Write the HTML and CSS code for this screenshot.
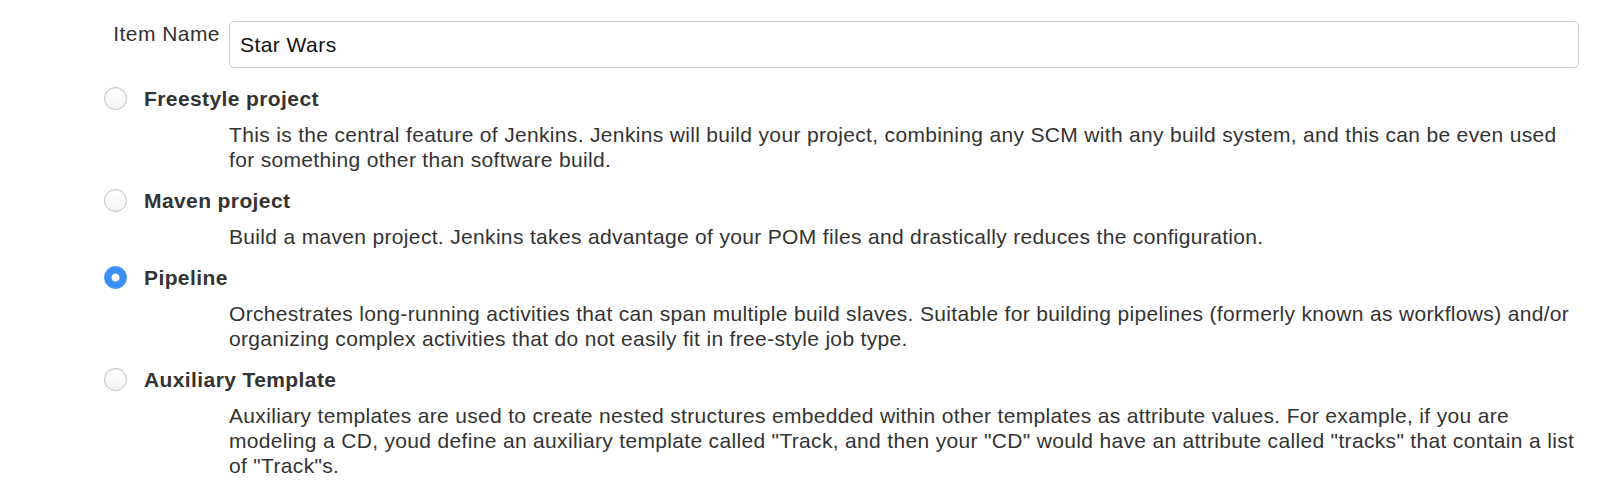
FILE: index.html
```html
<!DOCTYPE html>
<html lang="en">
<head>
    <meta charset="UTF-8">
    <title>New Item</title>
    <link rel="stylesheet" href="styles.css">
</head>
<body>
    <form class="new-item">
        <div class="name-row">
            <label for="name" class="name-label">Item Name</label>
            <input type="text" id="name" name="name" class="name-input" value="Star Wars">
        </div>

        <div class="option">
            <label class="option-title">
                <input type="radio" name="mode" value="freestyle">
                <span>Freestyle project</span>
            </label>
            <div class="option-desc">This is the central feature of Jenkins. Jenkins will build your project, combining any SCM with any build system, and this can be even used for something other than software build.</div>
        </div>

        <div class="option">
            <label class="option-title">
                <input type="radio" name="mode" value="maven">
                <span>Maven project</span>
            </label>
            <div class="option-desc">Build a maven project. Jenkins takes advantage of your POM files and drastically reduces the configuration.</div>
        </div>

        <div class="option">
            <label class="option-title">
                <input type="radio" name="mode" value="pipeline" checked>
                <span>Pipeline</span>
            </label>
            <div class="option-desc">Orchestrates long-running activities that can span multiple build slaves. Suitable for building pipelines (formerly known as workflows) and/or organizing complex activities that do not easily fit in free-style job type.</div>
        </div>

        <div class="option">
            <label class="option-title">
                <input type="radio" name="mode" value="auxiliary">
                <span>Auxiliary Template</span>
            </label>
            <div class="option-desc">Auxiliary templates are used to create nested structures embedded within other templates as attribute values. For example, if you are modeling a CD, youd define an auxiliary template called "Track, and then your "CD" would have an attribute called "tracks" that contain a list of "Track"s.</div>
        </div>
    </form>
</body>
</html>
```

FILE: styles.css
```css
body, html {
    margin: 0;
    padding: 0;
    background-color: #fff;
    font-family: 'Liberation Sans', Arial, sans-serif;
    font-size: 21px;
    line-height: 25px;
    letter-spacing: 0.33px;
    color: #333;
}
.new-item {
    padding: 21px 21px 0 0;
}
.name-row {
    display: grid;
    grid-template-columns: 220px 1fr;
    column-gap: 9px;
    align-items: start;
    margin-bottom: 18px;
}
.name-label {
    text-align: right;
    letter-spacing: 0.45px;
}
.name-input {
    box-sizing: border-box;
    width: 100%;
    height: 47px;
    margin: 0;
    padding: 0 10px;
    border: 1px solid #cccccc;
    border-radius: 5px;
    font-family: inherit;
    font-size: 21px;
    letter-spacing: 0.45px;
    color: #111;
    background-color: #fff;
}
.option {
    margin-bottom: 16.5px;
}
.option-title {
    display: flex;
    align-items: center;
    gap: 17px;
    padding-left: 104px;
    margin-bottom: 10.5px;
    font-weight: bold;
    letter-spacing: 0.4px;
    cursor: pointer;
}
.option-title input {
    appearance: none;
    -webkit-appearance: none;
    box-sizing: border-box;
    width: 23px;
    height: 23px;
    margin: 0;
    border: 1px solid #bfbfbf;
    border-radius: 50%;
    background: linear-gradient(#fff, #f4f4f4);
    box-shadow: inset 0 1px 1px rgba(0,0,0,0.05);
    flex-shrink: 0;
}
.option-title input:checked {
    border-color: #3b8ff7;
    background: radial-gradient(circle, #fff 0, #fff 3.5px, #3b8ff7 4.5px);
    box-shadow: none;
}
.option-desc {
    padding-left: 229px;
}
```
